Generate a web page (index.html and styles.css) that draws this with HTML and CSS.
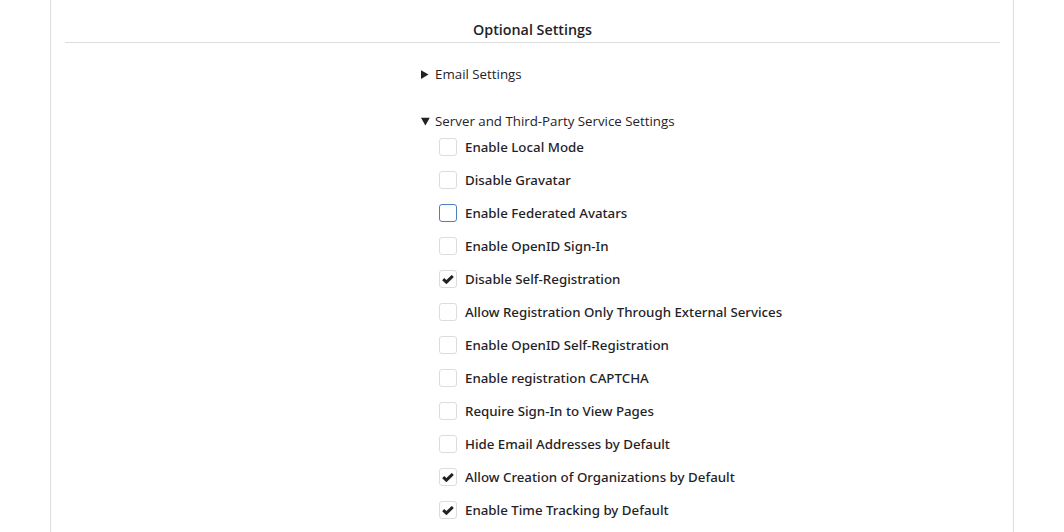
FILE: index.html
```html
<!DOCTYPE html>
<html>
<head>
<meta charset="utf-8">
<link rel="stylesheet" href="styles.css">
</head>
<body>
<div class="card">
  <h4 class="card-title">Optional Settings</h4>
  <div class="form">
    <details class="group">
      <summary>Email Settings</summary>
    </details>
    <details class="group" open>
      <summary>Server and Third-Party Service Settings</summary>
      <div class="fields">
        <label class="check"><span class="box"></span><span class="text">Enable Local Mode</span></label>
        <label class="check"><span class="box"></span><span class="text">Disable Gravatar</span></label>
        <label class="check"><span class="box focus"></span><span class="text">Enable Federated Avatars</span></label>
        <label class="check"><span class="box"></span><span class="text">Enable OpenID Sign-In</span></label>
        <label class="check"><span class="box"><svg viewBox="0 0 12 9" class="tick"><path d="M1.2 4.2 L4.4 7.2 L10.8 1" /></svg></span><span class="text">Disable Self-Registration</span></label>
        <label class="check"><span class="box"></span><span class="text">Allow Registration Only Through External Services</span></label>
        <label class="check"><span class="box"></span><span class="text">Enable OpenID Self-Registration</span></label>
        <label class="check"><span class="box"></span><span class="text">Enable registration CAPTCHA</span></label>
        <label class="check"><span class="box"></span><span class="text">Require Sign-In to View Pages</span></label>
        <label class="check"><span class="box"></span><span class="text">Hide Email Addresses by Default</span></label>
        <label class="check"><span class="box"><svg viewBox="0 0 12 9" class="tick"><path d="M1.2 4.2 L4.4 7.2 L10.8 1" /></svg></span><span class="text">Allow Creation of Organizations by Default</span></label>
        <label class="check"><span class="box"><svg viewBox="0 0 12 9" class="tick"><path d="M1.2 4.2 L4.4 7.2 L10.8 1" /></svg></span><span class="text">Enable Time Tracking by Default</span></label>
      </div>
    </details>
  </div>
</div>
</body>
</html>
```

FILE: styles.css
```css
html, body {
  margin: 0;
  padding: 0;
  background: #fff;
}
body {
  font-family: "Open Sans", "Noto Sans", sans-serif;
  font-size: 13px;
  color: #1f2328;
}
.card {
  width: 964px;
  height: 560px;
  margin: 0 auto;
  padding: 0 13px 0 14px;
  box-sizing: border-box;
  border: 1px solid #dedede;
  border-top: none;
}
.card-title {
  margin: 0;
  padding: 20px 0 0;
  height: 22px;
  line-height: 20px;
  text-align: center;
  font-size: 14.3px;
  font-weight: 600;
  border-bottom: 1px solid #dedede;
}
.form {
  padding-left: 356px;
  padding-top: 21px;
}
.group summary {
  display: list-item;
  cursor: pointer;
  line-height: 20px;
  font-size: 13.3px;
}
.group + .group {
  margin-top: 27px;
}
.fields {
  display: flex;
  flex-direction: column;
  gap: 15px;
  padding-left: 18px;
  padding-top: 7px;
}
.check {
  display: flex;
  align-items: center;
  gap: 8px;
  height: 18px;
}
.box {
  width: 18px;
  height: 18px;
  box-sizing: border-box;
  border: 1px solid #dcdcdc;
  border-radius: 3px;
  display: flex;
  align-items: center;
  justify-content: center;
  background: #fff;
}
.box.focus {
  border-color: #4a7fc4;
}
.tick {
  width: 12px;
  height: 9px;
  fill: none;
  stroke: #1f2328;
  stroke-width: 3;
  stroke-linecap: butt;
  stroke-linejoin: miter;
}
.text {
  font-family: "Noto Sans", "Open Sans", sans-serif;
  font-weight: 500;
  font-size: 13.3px;
  line-height: 18px;
}
```
